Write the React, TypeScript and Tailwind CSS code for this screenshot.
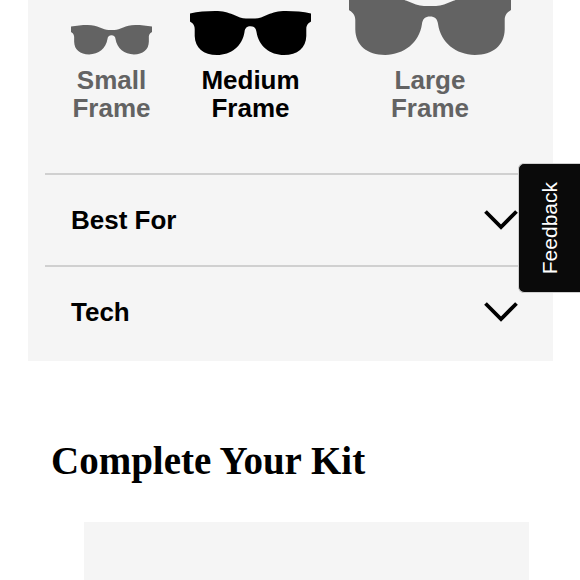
import { clsx } from 'clsx';

const FRAMES = [
  { size: 'Small', width: 'w-[81px]', selected: false },
  { size: 'Medium', width: 'w-[121px]', selected: true },
  { size: 'Large', width: 'w-[162px]', selected: false },
];

const SECTIONS = ['Best For', 'Tech'];

function Sunglasses() {
  return (
    <svg viewBox="0 0 121 44" className="block w-full" fill="currentColor" aria-hidden="true">
      <path d="M0 2.4C8 .8 16 0 25 0C33 0 38 1.600 43 3.600L50 6.400Q53 7.500 56 7.500H65Q68 7.500 71 6.400L78 3.600C83 1.600 88 0 96 0C105 0 113 .8 121 2.400V10.500C119.500 11.800 116.300 13 116.300 18V25C116 37 107.500 44 94 44C80 44 68.500 35 66.500 21C66 17 64 15.300 60.500 15.300C57 15.300 55 17 54.500 21C52.500 35 41 44 27 44C13.500 44 5 37 4.700 25V18C4.700 13 1.500 11.800 0 10.500Z" />
    </svg>
  );
}

function Chevron() {
  return (
    <svg
      viewBox="0 0 34 20"
      className="h-5 w-[34px]"
      fill="none"
      stroke="currentColor"
      strokeWidth="3.8"
      aria-hidden="true"
    >
      <path d="M1.500 1.500L17 17L32.500 1.500" />
    </svg>
  );
}

export default function App() {
  return (
    <main className="min-h-screen overflow-hidden bg-white font-['Liberation_Sans',Arial,sans-serif] text-black">
      <section className="-mt-1 mr-[27px] ml-7 bg-[#f5f5f5] pr-[18px] pl-[17px]">
        <div className="flex items-end justify-center gap-[38px] pb-[51px] pl-0.5">
          {FRAMES.map((frame) => (
            <button
              key={frame.size}
              type="button"
              aria-pressed={frame.selected}
              className={clsx(
                'flex flex-col gap-[11px] text-[26px] leading-7 font-bold',
                frame.width,
                frame.selected ? 'text-black' : 'text-[#636363]',
              )}
            >
              <Sunglasses />
              <span className="block w-full text-center">
                {frame.size}
                <br />
                Frame
              </span>
            </button>
          ))}
        </div>

        {SECTIONS.map((title) => (
          <button
            key={title}
            type="button"
            aria-expanded="false"
            className="flex h-[92px] w-full items-center justify-between border-t-2 border-[#d0d0d0] pr-[17px] pl-[26px] text-[26px] leading-7 font-bold"
          >
            {title}
            <Chevron />
          </button>
        ))}
        <div className="h-1" />
      </section>

      <section className="pt-[76px]">
        <h2 className="px-[51px] font-['Liberation_Serif',serif] text-[39px] leading-[48px] font-bold">
          Complete Your Kit
        </h2>
        <div className="mt-[37px] mr-[51px] ml-[84px] h-[60px] bg-[#f5f5f5]" />
      </section>

      <button
        type="button"
        className="fixed top-[163px] right-0 flex h-[130px] w-[62px] items-center justify-center rounded-l-md border border-r-0 border-[#d0d0d0] bg-[#0a0a0a] text-[21px] leading-6 text-white"
      >
        <span className="rotate-180 [writing-mode:vertical-rl]">Feedback</span>
      </button>
    </main>
  );
}
